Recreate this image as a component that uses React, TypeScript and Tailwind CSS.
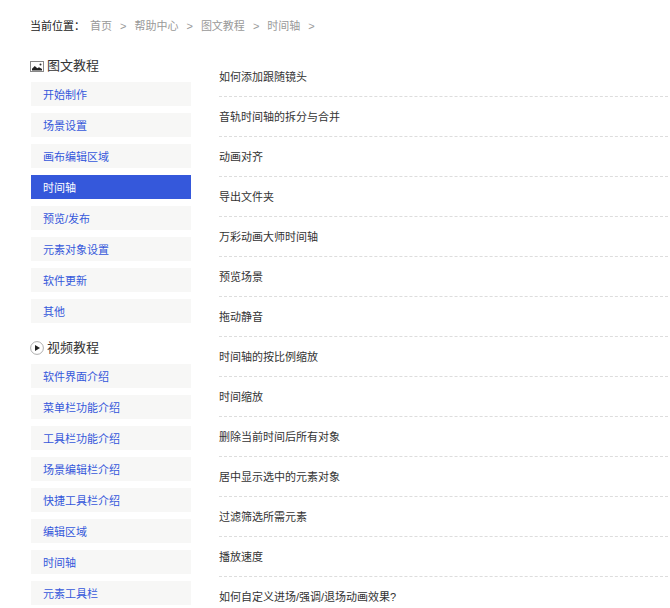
import { Fragment, ReactNode } from "react";

interface SidebarSectionProps {
  title: string;
  icon: ReactNode;
  items: string[];
  active?: string;
}

const breadcrumbs = ["首页", "帮助中心", "图文教程", "时间轴"];

const guideItems = [
  "开始制作",
  "场景设置",
  "画布编辑区域",
  "时间轴",
  "预览/发布",
  "元素对象设置",
  "软件更新",
  "其他",
];

const videoItems = [
  "软件界面介绍",
  "菜单栏功能介绍",
  "工具栏功能介绍",
  "场景编辑栏介绍",
  "快捷工具栏介绍",
  "编辑区域",
  "时间轴",
  "元素工具栏",
];

const articles = [
  "如何添加跟随镜头",
  "音轨时间轴的拆分与合并",
  "动画对齐",
  "导出文件夹",
  "万彩动画大师时间轴",
  "预览场景",
  "拖动静音",
  "时间轴的按比例缩放",
  "时间缩放",
  "删除当前时间后所有对象",
  "居中显示选中的元素对象",
  "过滤筛选所需元素",
  "播放速度",
  "如何自定义进场/强调/退场动画效果?",
];

function PictureIcon() {
  return (
    <svg className="w-[14px] h-[14px] shrink-0" viewBox="0 0 14 14" fill="none" aria-hidden="true">
      <rect x="0.5" y="2.5" width="13" height="10" stroke="#888" />
      <path d="M2 11.5V9.8L4.8 7L7.3 9.3L9 8.3L12 10V11.5Z" fill="#222" />
      <circle cx="10.5" cy="5.5" r="1" fill="#333" />
    </svg>
  );
}

function PlayIcon() {
  return (
    <svg className="w-[14px] h-[14px] shrink-0" viewBox="0 0 14 14" fill="none" aria-hidden="true">
      <circle cx="7" cy="7" r="6.4" stroke="#999" strokeWidth="0.8" />
      <path d="M5 4L10 7L5 10Z" fill="#222" />
    </svg>
  );
}

function SidebarSection({ title, icon, items, active }: SidebarSectionProps) {
  return (
    <section>
      <h2 className="flex items-center gap-[3px] h-5 mb-[6px] text-[13px] text-[#333]">
        {icon}
        {title}
      </h2>
      <ul className="flex flex-col gap-[7px] pl-px">
        {items.map((item) => (
          <li key={item}>
            <a
              href="#"
              className={`block h-6 leading-[26px] pl-3 ${
                item === active ? "bg-[#3558db] text-white" : "bg-[#f7f7f6] text-[#3558db]"
              }`}
            >
              {item}
            </a>
          </li>
        ))}
      </ul>
    </section>
  );
}

export default function App() {
  return (
    <div className="min-h-screen bg-white pl-[30px] pt-4 text-[11px] text-[#333] font-['Liberation_Sans','Noto_Sans_CJK_SC',sans-serif]">
      <nav className="flex items-center h-5 text-[#999]">
        <span className="text-[#222] mr-[5px]">当前位置：</span>
        {breadcrumbs.map((crumb) => (
          <Fragment key={crumb}>
            <a href="#">{crumb}</a>
            <span className="mx-2">&gt;</span>
          </Fragment>
        ))}
      </nav>

      <div className="flex items-start gap-7 mt-5">
        <aside className="w-[161px] shrink-0 flex flex-col gap-[15px]">
          <SidebarSection title="图文教程" icon={<PictureIcon />} items={guideItems} active="时间轴" />
          <SidebarSection title="视频教程" icon={<PlayIcon />} items={videoItems} />
        </aside>

        <main className="flex-1 pt-px pr-[2px]">
          <ul>
            {articles.map((article) => (
              <li key={article} className="h-10 border-b border-dashed border-[#ddd]">
                <a href="#" className="block leading-10">
                  {article}
                </a>
              </li>
            ))}
          </ul>
        </main>
      </div>
    </div>
  );
}
